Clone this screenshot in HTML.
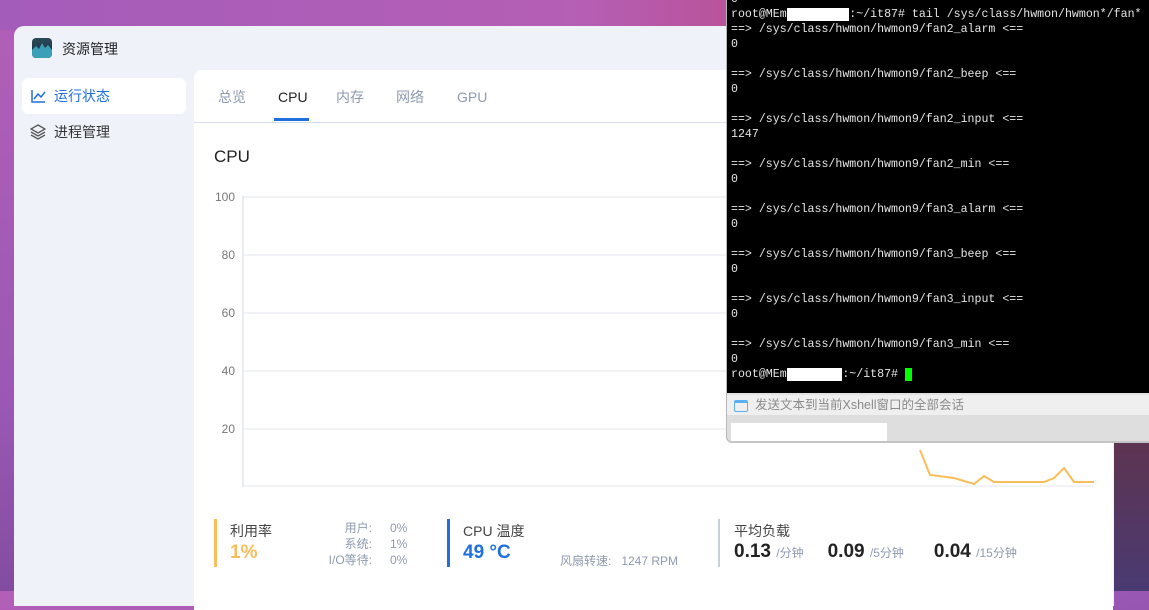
<!DOCTYPE html>
<html><head><meta charset="utf-8"><style>
*{margin:0;padding:0;box-sizing:border-box}
body{width:1149px;height:591px;overflow:hidden;position:relative;font-family:"Liberation Sans","Noto Sans CJK SC",sans-serif;background:linear-gradient(160deg,#b35fb8 0%,#9a58b4 40%,#6a3f8a 80%,#4d3a78 100%)}
.top{position:absolute;left:0;top:0;width:1149px;height:30px;background:linear-gradient(90deg,#a45cba,#b55fb5 50%,#c04070 85%,#b0344f)}
.rbg{position:absolute;left:1113px;top:440px;width:36px;height:151px;background:linear-gradient(180deg,#5e3450,#4a3a72)}
.win{position:absolute;left:14px;top:26px;width:1100px;height:580px;background:#eff3f9;border-radius:10px 0 0 0}
.logo{position:absolute;left:18px;top:12px;width:20px;height:20px;border-radius:4px;background:linear-gradient(180deg,#2a4a5a,#1a2f3a);overflow:hidden}
.title{position:absolute;left:48px;top:13px;font-size:14px;color:#222}
.nav{position:absolute;left:8px;width:164px;height:36px;border-radius:6px;font-size:14px;line-height:36px;padding-left:32px}
.card{position:absolute;left:180px;top:44px;width:919px;height:540px;background:#fff;border-radius:8px 8px 0 0}
.tabs{position:absolute;left:0;top:0;width:100%;height:53px;border-bottom:1px solid #d5dde8}
.tab{position:absolute;top:18px;font-size:14px;line-height:18px;color:#8e9ab0}
.yl{position:absolute;font-size:12px;color:#777;width:30px;text-align:right}
.gl{position:absolute;left:49px;width:850px;height:2px;background:#f1f3f7}
.term{position:absolute;left:726px;top:0;width:423px;height:443px;background:#dedede;border-left:1px solid #b8b8b8;border-bottom:2px solid #c4c4c4;border-radius:0 0 0 6px}
.scr{position:absolute;left:0;top:0;width:423px;height:393px;background:#000;font-family:"Liberation Mono",monospace;font-size:11.6px;line-height:15px;color:#e6e6e6;padding-left:4px;white-space:pre;overflow:hidden}
.bar{position:absolute;left:0;top:393px;width:423px;height:22px;background:#efefef;border-top:2px solid #e2e2e2;font-size:12.5px;color:#8a8a8a;line-height:20px;padding-left:28px}
.s{font-size:12px;color:#8e9ab0}
</style></head><body>
<div class="top"></div>
<div class="rbg"></div>
<div class="win">
 <div class="logo"><svg width="20" height="20"><path d="M0 20 L0 12 L4 8 L7 11 L10 5 L13 10 L16 7 L20 12 L20 20Z" fill="#3aa0b8"/></svg></div>
 <div class="title">资源管理</div>
 <div class="nav" style="top:52px;background:#fff;color:#1f6fde">运行状态
  <svg style="position:absolute;left:9px;top:11px" width="15" height="14"><path d="M1 1V13H14M3 10L7 5L10 8L14 3" fill="none" stroke="#1f6fde" stroke-width="1.5"/></svg></div>
 <div class="nav" style="top:88px;color:#333">进程管理
  <svg style="position:absolute;left:8px;top:10px" width="16" height="16"><path d="M8 1L15 5L8 9L1 5Z M1 8L8 12L15 8 M1 11L8 15L15 11" fill="none" stroke="#555" stroke-width="1.3"/></svg></div>
 <div class="card">
  <div class="tabs">
   <div class="tab" style="left:24px">总览</div>
   <div class="tab" style="left:84px;color:#222">CPU</div>
   <div style="position:absolute;left:80px;top:48px;width:35px;height:3px;background:#1f6fde"></div>
   <div class="tab" style="left:142px">内存</div>
   <div class="tab" style="left:202px">网络</div>
   <div class="tab" style="left:263px">GPU</div>
  </div>
  <div style="position:absolute;left:20px;top:77px;font-size:17px;color:#222">CPU</div>
  <div class="yl" style="left:11px;top:120px">100</div>
  <div class="yl" style="left:11px;top:178px">80</div>
  <div class="yl" style="left:11px;top:236px">60</div>
  <div class="yl" style="left:11px;top:294px">40</div>
  <div class="yl" style="left:11px;top:352px">20</div>
  <div class="gl" style="top:126px"></div><div class="gl" style="top:184px"></div><div class="gl" style="top:242px"></div><div class="gl" style="top:300px"></div><div class="gl" style="top:358px"></div><div class="gl" style="top:415px"></div>
  <div style="position:absolute;left:48px;top:126px;width:2px;height:291px;background:#e8ebf2"></div>
  <svg style="position:absolute;left:700px;top:370px" width="200" height="50"><path d="M26 10 L36 35 L60 38 L80 44 L90 36 L100 42 L150 42 L160 38 L170 28 L180 42 L200 42" fill="none" stroke="#fbbd5a" stroke-width="2"/></svg>
  <div style="position:absolute;left:20px;top:449px;width:3px;height:48px;background:#fbbd5a"></div>
  <div style="position:absolute;left:36px;top:451px;font-size:14px;color:#444">利用率</div>
  <div style="position:absolute;left:36px;top:472px;font-size:19px;font-weight:bold;color:#fbbd5a">1%</div>
  <div class="s" style="position:absolute;left:90px;top:450px;width:88px;text-align:right;line-height:16px">用户:<br>系统:<br>I/O等待:</div>
  <div class="s" style="position:absolute;left:196px;top:450px;line-height:16px">0%<br>1%<br>0%</div>
  <div style="position:absolute;left:253px;top:449px;width:3px;height:48px;background:#1f6fde"></div>
  <div style="position:absolute;left:269px;top:451px;font-size:14px;color:#444">CPU 温度</div>
  <div style="position:absolute;left:269px;top:472px;font-size:19px;font-weight:bold;color:#1f6fde">49 °C</div>
  <div class="s" style="position:absolute;left:366px;top:482px">风扇转速:&nbsp;&nbsp; 1247 RPM</div>
  <div style="position:absolute;left:524px;top:449px;width:2px;height:48px;background:#c8d0dc"></div>
  <div style="position:absolute;left:540px;top:451px;font-size:14px;color:#444">平均负载</div>
  <div style="position:absolute;left:540px;top:471px;font-size:19px;font-weight:bold;color:#222;white-space:nowrap">0.13 <span class="s" style="font-weight:normal">/分钟</span><span style="display:inline-block;width:24px"></span>0.09 <span class="s" style="font-weight:normal">/5分钟</span><span style="display:inline-block;width:30px"></span>0.04 <span class="s" style="font-weight:normal">/15分钟</span></div>
 </div>
</div>
<div class="term">
<div class="scr"><div style="margin-top:-8px">0
root@MEm<span style="background:#fff">         </span>:~/it87# tail /sys/class/hwmon/hwmon*/fan*
==&gt; /sys/class/hwmon/hwmon9/fan2_alarm &lt;==
0

==&gt; /sys/class/hwmon/hwmon9/fan2_beep &lt;==
0

==&gt; /sys/class/hwmon/hwmon9/fan2_input &lt;==
1247

==&gt; /sys/class/hwmon/hwmon9/fan2_min &lt;==
0

==&gt; /sys/class/hwmon/hwmon9/fan3_alarm &lt;==
0

==&gt; /sys/class/hwmon/hwmon9/fan3_beep &lt;==
0

==&gt; /sys/class/hwmon/hwmon9/fan3_input &lt;==
0

==&gt; /sys/class/hwmon/hwmon9/fan3_min &lt;==
0
root@MEm<span style="background:#fff">        </span>:~/it87# <span style="background:#00ff00"> </span></div></div>
<div class="bar"><div style="position:absolute;left:7px;top:5px;width:14px;height:12px;border:1.5px solid #5ab0f0;border-top-width:3px;border-radius:2px"></div>发送文本到当前Xshell窗口的全部会话</div>
<div style="position:absolute;left:4px;top:423px;width:156px;height:18px;background:#fff"></div>
</div>
</body></html>
